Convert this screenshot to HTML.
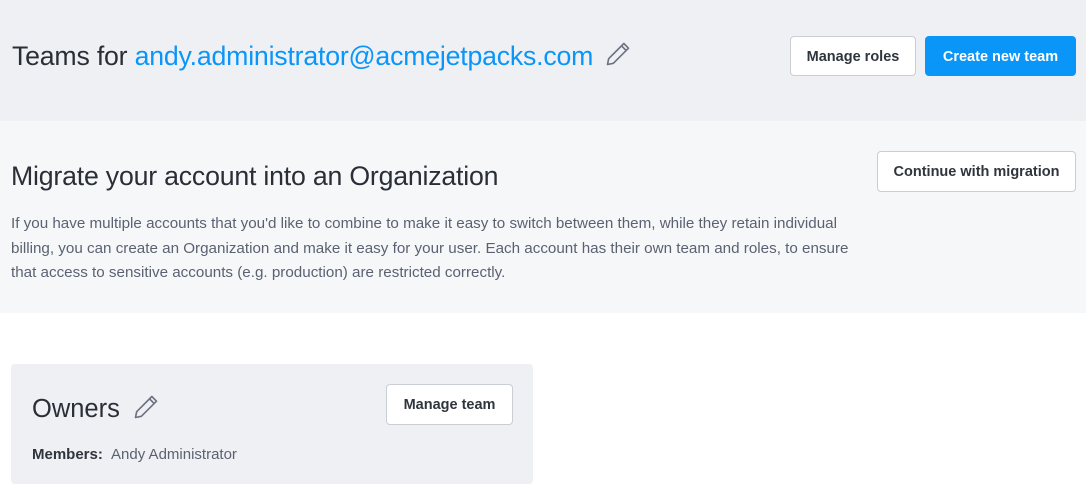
<!DOCTYPE html>
<html><head><style>
*{margin:0;padding:0;box-sizing:border-box}
body{width:1086px;height:500px;background:#fff;font-family:"Liberation Sans",sans-serif;position:relative;overflow:hidden;color:#2a2f37}
.abs{position:absolute;white-space:nowrap}
.btn{position:absolute;border:1px solid #c9cdd4;border-radius:4px;background:#fff;font-weight:bold;font-size:14.5px;color:#2f353d;display:flex;align-items:center;justify-content:center;padding-top:1px}
</style></head><body>
<div class="abs" style="left:0;top:0;width:1086px;height:121px;background:#eff0f4"></div>
<div class="abs" style="left:0;top:121px;width:1086px;height:192px;background:#f6f7f9"></div>
<div class="abs" style="left:12px;top:41px;font-size:26.7px;letter-spacing:-0.2px">Teams for <span style="color:#0a96f8">andy.administrator@acmejetpacks.com</span></div>
<svg class="abs" style="left:604px;top:40px" width="28" height="28" viewBox="0 0 24 24" fill="none" stroke="#6b7280" stroke-width="1.4" stroke-linejoin="round"><path d="M17 3l4 4L8 20l-5 1 1-5z"/><path d="M15 5l4 4"/></svg>
<div class="btn" style="left:790px;top:36px;width:126px;height:40px">Manage roles</div>
<div class="btn" style="left:925px;top:36px;width:151px;height:40px;background:#0a96f8;border-color:#0a96f8;color:#fff">Create new team</div>
<div class="abs" style="left:11px;top:161px;font-size:26.7px;letter-spacing:-0.2px">Migrate your account into an Organization</div>
<div class="btn" style="left:877px;top:151px;width:199px;height:41px">Continue with migration</div>
<div class="abs" style="left:11px;top:212px;font-size:15.2px;line-height:24.5px;color:#5a6272;white-space:normal;width:850px">If you have multiple accounts that you'd like to combine to make it easy to switch between them, while they retain individual billing, you can create an Organization and make it easy for your user. Each account has their own team and roles, to ensure that access to sensitive accounts (e.g. production) are restricted correctly.</div>
<div class="abs" style="left:11px;top:364px;width:522px;height:120px;background:#eff0f4;border-radius:4px"></div>
<div class="abs" style="left:32px;top:395px;font-size:25.5px">Owners</div>
<svg class="abs" style="left:132px;top:393px" width="28" height="28" viewBox="0 0 24 24" fill="none" stroke="#6b7280" stroke-width="1.4" stroke-linejoin="round"><path d="M17 3l4 4L8 20l-5 1 1-5z"/><path d="M15 5l4 4"/></svg>
<div class="btn" style="left:386px;top:384px;width:127px;height:41px">Manage team</div>
<div class="abs" style="left:32px;top:446px;font-size:15px"><b style="color:#2f353d">Members:</b> <span style="color:#5a6272;margin-left:4px">Andy Administrator</span></div>
</body></html>
